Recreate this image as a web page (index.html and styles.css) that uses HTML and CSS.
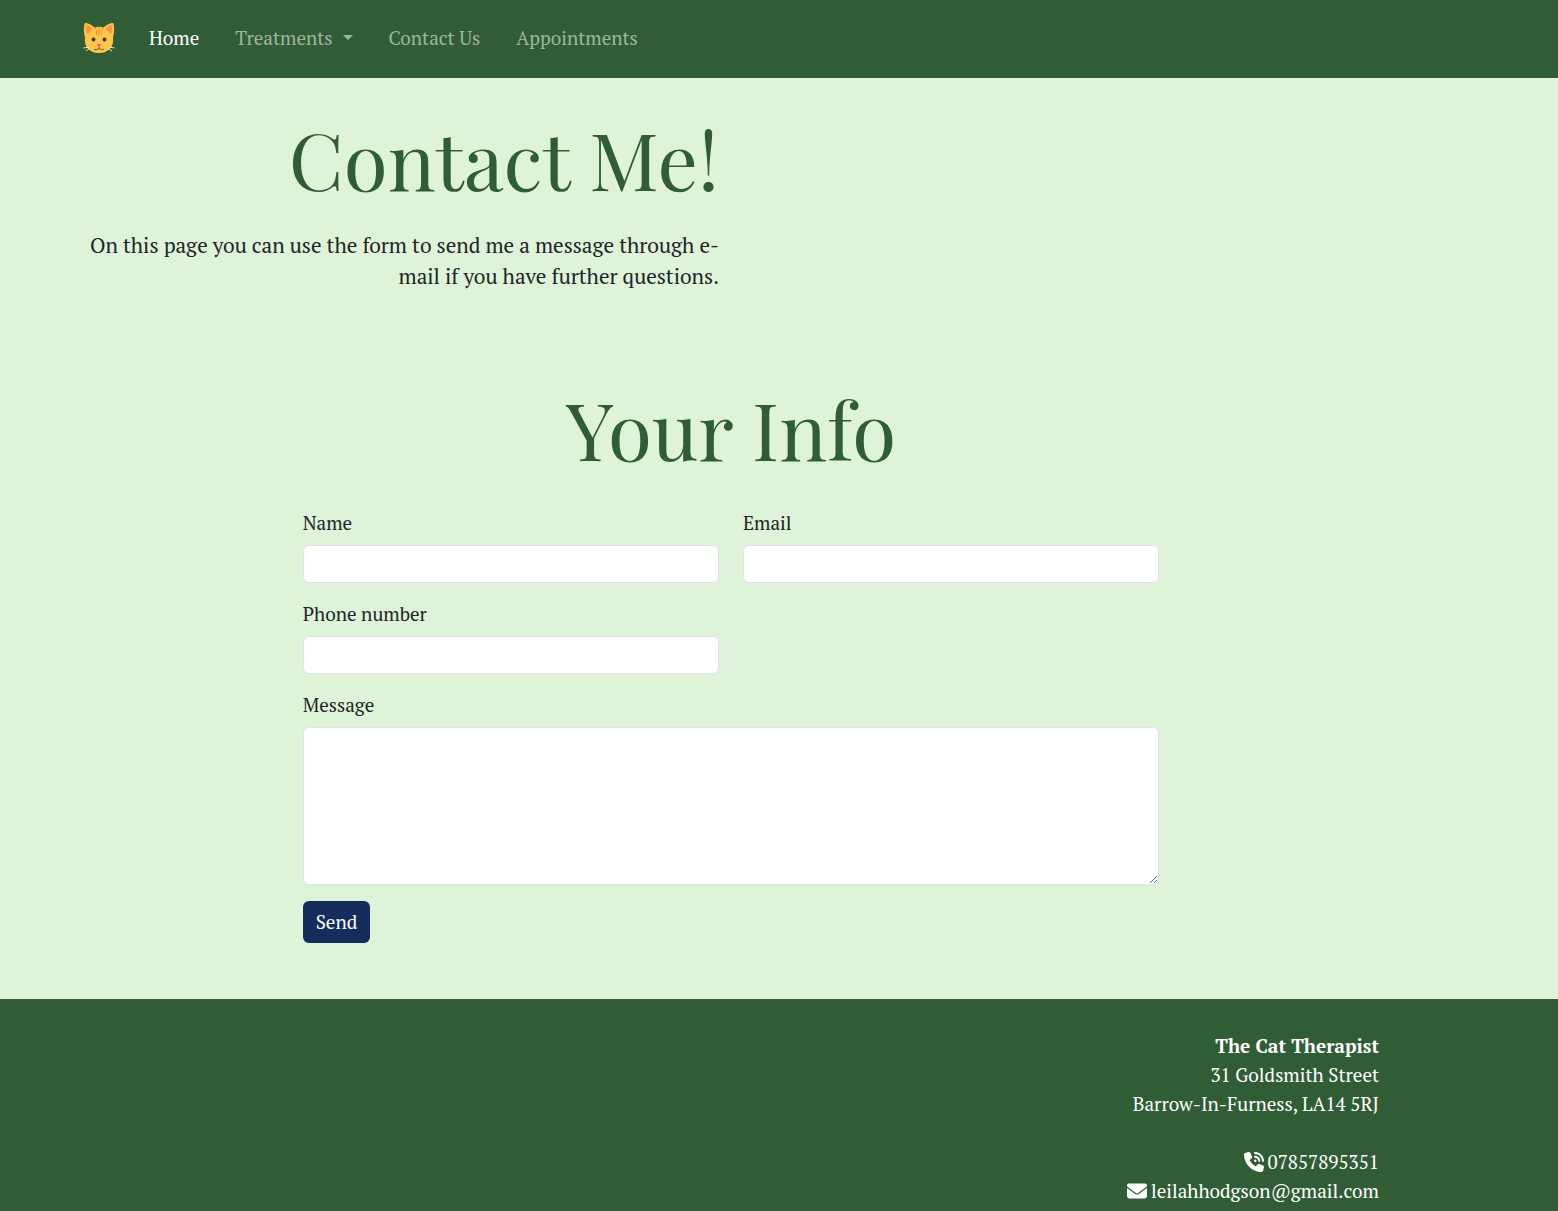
FILE: index.html
```html
<!DOCTYPE html>
<html lang="en">
<head>
  <meta charset="utf-8">
  <meta name="viewport" content="width=device-width, initial-scale=1">
  <title>Contact – The Cat Therapist</title>
  <link rel="stylesheet" href="styles.css">
</head>
<body>
  <header class="navbar">
    <nav class="container nav">
      <a class="brand" href="#" aria-label="The Cat Therapist">
        <svg width="32" height="32" viewBox="0 0 32 32" aria-hidden="true">
          <path fill="#ffc54a" d="M2 1C4 .5 9 3 11.500 5.500Q16 4 20.500 5.500C23 3 28 .5 30 1C31.500 3 31.500 11 30 15C31.500 25 25 31 16 31S.5 25 2 15C.5 11 .5 3 2 1Z"/>
          <path fill="#ff9540" d="M3 3C5 3 8 5 9.500 7L4 12C2.500 9 2.300 5 3 3ZM29 3C27 3 24 5 22.500 7L28 12C29.500 9 29.700 5 29 3Z"/>
          <g fill="none" stroke="#f39b34" stroke-width="1.500" stroke-linecap="round">
            <path d="M16 6v7M12.500 6.500q2 3 1 6M19.500 6.500q-2 3-1 6"/>
          </g>
          <circle cx="10.500" cy="17.500" r="1.900" fill="#353535"/>
          <circle cx="21.500" cy="17.500" r="1.900" fill="#353535"/>
          <path fill="#ff5a79" d="M13.800 22.300q2.200-.8 4.400 0q0 1.200-2.200 3q-2.200-1.800-2.200-3Z"/>
          <path fill="none" stroke="#6d6042" d="M16 25v1.500q-2 2-5 .8M16 26.500q2 2 5 .8"/>
          <path fill="none" stroke="#fbe8bd" d="M6 25L.5 26M6.500 26.500L3 29M26 25l5.500 1M25.500 26.500l3.500 2.500"/>
        </svg>
      </a>
      <ul class="nav-links">
        <li><a class="nav-link active" href="#" aria-current="page">Home</a></li>
        <li><a class="nav-link dropdown" href="#">Treatments</a></li>
        <li><a class="nav-link" href="#">Contact Us</a></li>
        <li><a class="nav-link" href="#">Appointments</a></li>
      </ul>
    </nav>
  </header>

  <main class="container">
    <section class="intro">
      <h1 class="title">Contact Me!</h1>
      <p class="lead">On this page you can use the form to send me a message through e-mail if you have further questions.</p>
    </section>

    <section class="info">
      <h2 class="title">Your Info</h2>
      <form class="form">
        <div class="field">
          <label for="name">Name</label>
          <input class="control" id="name" type="text">
        </div>
        <div class="field">
          <label for="email">Email</label>
          <input class="control" id="email" type="email">
        </div>
        <div class="field">
          <label for="phone">Phone number</label>
          <input class="control" id="phone" type="tel">
        </div>
        <div class="field wide">
          <label for="message">Message</label>
          <textarea class="control message" id="message"></textarea>
        </div>
        <button class="send" type="submit">Send</button>
      </form>
    </section>
  </main>

  <footer class="footer">
    <div class="container">
      <address class="address">
        <strong>The Cat Therapist</strong>
        <span>31 Goldsmith Street</span>
        <span>Barrow-In-Furness, LA14 5RJ</span>
        <a class="contact phone" href="tel:07857895351">
          <svg class="icon" viewBox="0 0 512 512" aria-hidden="true"><path d="M280 0C408.100 0 512 103.900 512 232c0 13.300-10.700 24-24 24s-24-10.700-24-24c0-101.600-82.400-184-184-184c-13.300 0-24-10.700-24-24s10.700-24 24-24zm8 192a32 32 0 1 1 0 64 32 32 0 1 1 0-64zm-32-72c0-13.300 10.700-24 24-24c75.100 0 136 60.900 136 136c0 13.300-10.700 24-24 24s-24-10.700-24-24c0-48.600-39.400-88-88-88c-13.300 0-24-10.700-24-24zM117.500 1.400c19.400-5.300 39.700 4.600 47.400 23.200l40 96c6.800 16.300 2.100 35.200-11.600 46.300L144 207.300c33.300 70.400 90.300 127.400 160.700 160.700L345 318.700c11.200-13.700 30-18.400 46.300-11.600l96 40c18.600 7.700 28.500 28 23.200 47.400l-24 88C481.800 499.900 466 512 448 512C200.600 512 0 311.400 0 64C0 46 12.100 30.200 29.500 25.400l88-24z"/></svg>
          <span>07857895351</span>
        </a>
        <a class="contact" href="mailto:leilahhodgson@gmail.com">
          <svg class="icon" viewBox="0 0 512 512" aria-hidden="true"><path d="M48 64C21.500 64 0 85.500 0 112c0 15.100 7.100 29.300 19.200 38.400L236.800 313.600c11.400 8.500 27 8.500 38.400 0L492.800 150.400c12.100-9.100 19.200-23.300 19.200-38.400c0-26.500-21.500-48-48-48H48zM0 176V384c0 35.300 28.700 64 64 64H448c35.300 0 64-28.700 64-64V176L294.400 339.200c-22.800 17.100-54 17.100-76.800 0L0 176z"/></svg>
          <span>leilahhodgson@gmail.com</span>
        </a>
      </address>
    </div>
  </footer>
</body>
</html>
```

FILE: styles.css
```css
*,
*::before,
*::after {
  box-sizing: border-box;
}

body {
  display: flex;
  flex-direction: column;
  min-height: 100vh;
  margin: 0;
  background: #dff3d8;
  color: #212529;
  font-family: "PT Serif", "Liberation Serif", serif;
  font-size: 19px;
  line-height: 29px;
}

.navbar,
.footer {
  padding-right: 96px;
}

.container {
  width: 100%;
  max-width: 1320px;
  margin: 0 auto;
  padding: 0 12px;
}

main.container {
  max-width: 1416px;
  padding: 32px 108px 56px 12px;
}

.navbar {
  background: #305d36;
}

.nav {
  display: flex;
  align-items: center;
  gap: 16px;
  min-height: 78px;
  padding-bottom: 2px;
}

.brand,
.brand svg {
  display: block;
}

.nav-links {
  display: flex;
  flex-wrap: wrap;
  margin: 0;
  padding: 0 0 2px;
  list-style: none;
}

.nav-link {
  display: flex;
  align-items: center;
  gap: 10px;
  padding: 8px 18px;
  color: #a0b5a0;
  text-decoration: none;
}

.nav-link.active {
  color: #fff;
}

.dropdown::after {
  content: "";
  border-top: 5px solid;
  border-right: 5px solid transparent;
  border-left: 5px solid transparent;
}

.title {
  margin: 0;
  color: #305d36;
  font-family: "Playfair Display", "Liberation Serif", serif;
  font-size: 80px;
  font-weight: 400;
  line-height: 96px;
}

.intro {
  width: 50%;
  padding-right: 12px;
  text-align: right;
}

.lead {
  margin: 24px 0 88px;
  font-size: 21px;
  line-height: 31px;
}

.info {
  width: 66.1%;
  margin: 0 auto;
}

.info .title {
  margin-bottom: 32px;
  text-align: center;
}

.form {
  display: grid;
  grid-template-columns: 1fr 1fr;
  gap: 16px 24px;
}

.field {
  display: flex;
  flex-direction: column;
  grid-column-start: 1;
  gap: 8px;
}

.field:nth-child(2) {
  grid-column-start: 2;
}

.field.wide {
  grid-column: 1 / -1;
}

.control {
  width: 100%;
  height: 38px;
  padding: 6px 12px;
  border: 1px solid #dee2e6;
  border-radius: 6px;
  background: #fff;
  color: inherit;
  font: inherit;
}

.message {
  height: 158px;
  resize: vertical;
}

.send {
  justify-self: start;
  padding: 6px 13px;
  border: 0;
  border-radius: 6px;
  background: #142d5c;
  color: #fff;
  font: inherit;
  line-height: 30px;
}

.footer {
  flex: 1;
  padding-top: 32px;
  background: #305d36;
  color: #fff;
}

.address {
  display: flex;
  flex-direction: column;
  align-items: flex-end;
  font-style: normal;
}

.contact {
  display: flex;
  align-items: center;
  gap: 4px;
  color: #fff;
  text-decoration: none;
}

.phone {
  margin-top: 29px;
}

.icon {
  width: 20px;
  height: 20px;
  fill: currentColor;
}
```
